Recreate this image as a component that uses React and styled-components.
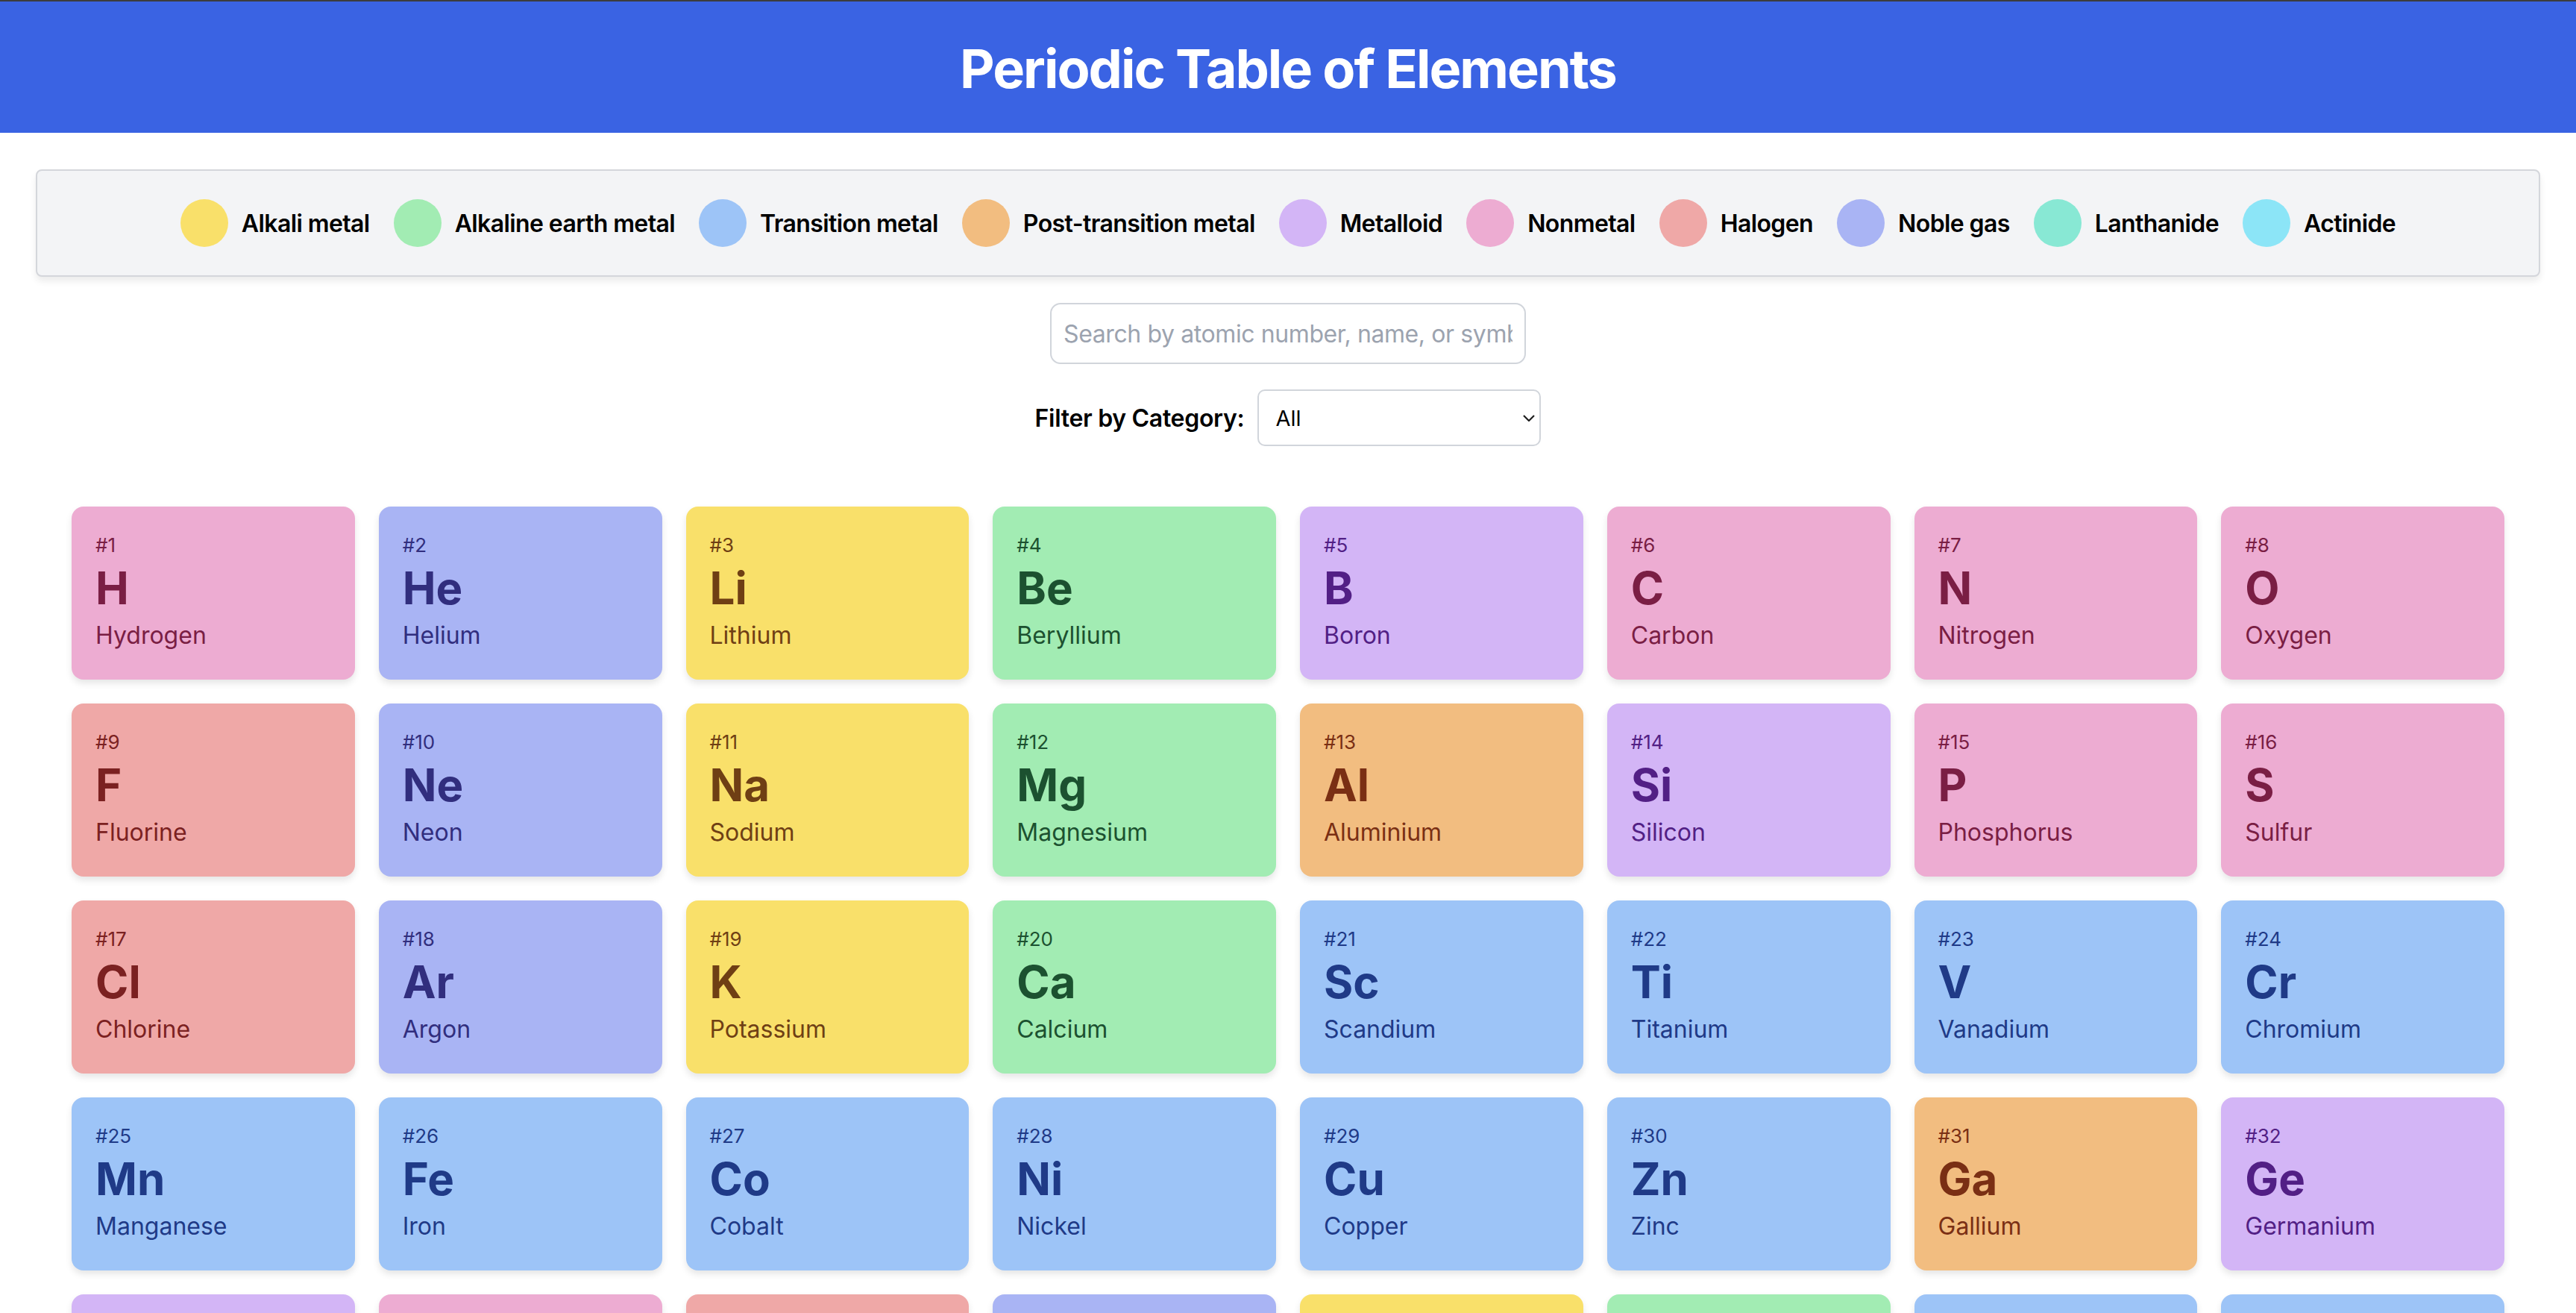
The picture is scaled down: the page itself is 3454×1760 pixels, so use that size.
import { useState } from "react";
import styled, { createGlobalStyle } from "styled-components";

const CATEGORIES = {
  alkali: { label: "Alkali metal", bg: "#f9e06a", fg: "#6f3f14" },
  alkaline: { label: "Alkaline earth metal", bg: "#a2ecb3", fg: "#1c5130" },
  transition: { label: "Transition metal", bg: "#9dc4f7", fg: "#1f3a87" },
  post: { label: "Post-transition metal", bg: "#f2bd80", fg: "#7a2f14" },
  metalloid: { label: "Metalloid", bg: "#d3b5f6", fg: "#521f85" },
  nonmetal: { label: "Nonmetal", bg: "#edacd2", fg: "#7a1e44" },
  halogen: { label: "Halogen", bg: "#efa8a7", fg: "#7b2121" },
  noble: { label: "Noble gas", bg: "#a9b4f4", fg: "#312e7e" },
  lanthanide: { label: "Lanthanide", bg: "#88e8d4", fg: "#134e4a" },
  actinide: { label: "Actinide", bg: "#8ce5f7", fg: "#164e63" },
};

const ELEMENTS = [
  [1, "H", "Hydrogen", "nonmetal"],
  [2, "He", "Helium", "noble"],
  [3, "Li", "Lithium", "alkali"],
  [4, "Be", "Beryllium", "alkaline"],
  [5, "B", "Boron", "metalloid"],
  [6, "C", "Carbon", "nonmetal"],
  [7, "N", "Nitrogen", "nonmetal"],
  [8, "O", "Oxygen", "nonmetal"],
  [9, "F", "Fluorine", "halogen"],
  [10, "Ne", "Neon", "noble"],
  [11, "Na", "Sodium", "alkali"],
  [12, "Mg", "Magnesium", "alkaline"],
  [13, "Al", "Aluminium", "post"],
  [14, "Si", "Silicon", "metalloid"],
  [15, "P", "Phosphorus", "nonmetal"],
  [16, "S", "Sulfur", "nonmetal"],
  [17, "Cl", "Chlorine", "halogen"],
  [18, "Ar", "Argon", "noble"],
  [19, "K", "Potassium", "alkali"],
  [20, "Ca", "Calcium", "alkaline"],
  [21, "Sc", "Scandium", "transition"],
  [22, "Ti", "Titanium", "transition"],
  [23, "V", "Vanadium", "transition"],
  [24, "Cr", "Chromium", "transition"],
  [25, "Mn", "Manganese", "transition"],
  [26, "Fe", "Iron", "transition"],
  [27, "Co", "Cobalt", "transition"],
  [28, "Ni", "Nickel", "transition"],
  [29, "Cu", "Copper", "transition"],
  [30, "Zn", "Zinc", "transition"],
  [31, "Ga", "Gallium", "post"],
  [32, "Ge", "Germanium", "metalloid"],
  [33, "As", "Arsenic", "metalloid"],
  [34, "Se", "Selenium", "nonmetal"],
  [35, "Br", "Bromine", "halogen"],
  [36, "Kr", "Krypton", "noble"],
  [37, "Rb", "Rubidium", "alkali"],
  [38, "Sr", "Strontium", "alkaline"],
  [39, "Y", "Yttrium", "transition"],
  [40, "Zr", "Zirconium", "transition"],
  [41, "Nb", "Niobium", "transition"],
  [42, "Mo", "Molybdenum", "transition"],
  [43, "Tc", "Technetium", "transition"],
  [44, "Ru", "Ruthenium", "transition"],
  [45, "Rh", "Rhodium", "transition"],
  [46, "Pd", "Palladium", "transition"],
  [47, "Ag", "Silver", "transition"],
  [48, "Cd", "Cadmium", "transition"],
];

function App() {
  const [query, setQuery] = useState("");
  const [category, setCategory] = useState("all");

  const q = query.trim().toLowerCase();
  const shown = ELEMENTS.filter(([num, sym, name, cat]) => {
    if (category !== "all" && cat !== category) return false;
    if (!q) return true;
    return (
      String(num) === q ||
      sym.toLowerCase().includes(q) ||
      name.toLowerCase().includes(q)
    );
  });

  return (
    <>
      <GlobalStyle />
      <Header>
        <Title>Periodic Table of Elements</Title>
      </Header>
      <Main>
        <Legend>
          {Object.entries(CATEGORIES).map(([key, c]) => (
            <LegendItem key={key}>
              <Swatch color={c.bg} />
              <LegendLabel>{c.label}</LegendLabel>
            </LegendItem>
          ))}
        </Legend>

        <Controls>
          <SearchInput
            placeholder="Search by atomic number, name, or symbol"
            value={query}
            onChange={(e) => setQuery(e.target.value)}
          />
          <FilterRow>
            <FilterLabel htmlFor="cat">Filter by Category:</FilterLabel>
            <SelectWrap>
              <Select
                id="cat"
                value={category}
                onChange={(e) => setCategory(e.target.value)}
              >
                <option value="all">All</option>
                {Object.entries(CATEGORIES).map(([key, c]) => (
                  <option key={key} value={key}>
                    {c.label}
                  </option>
                ))}
              </Select>
              <Chevron viewBox="0 0 16 9" aria-hidden="true">
                <path d="M1 1l7 7 7-7" />
              </Chevron>
            </SelectWrap>
          </FilterRow>
        </Controls>

        <Grid>
          {shown.map(([num, sym, name, cat]) => (
            <Card key={num} bg={CATEGORIES[cat].bg} fg={CATEGORIES[cat].fg}>
              <Number>#{num}</Number>
              <Symbol>{sym}</Symbol>
              <Name>{name}</Name>
            </Card>
          ))}
        </Grid>
      </Main>
    </>
  );
}

const GlobalStyle = createGlobalStyle`
  * { box-sizing: border-box; }
  body {
    margin: 0;
    background: #ffffff;
    font-family: Inter, "Noto Sans", "Liberation Sans", sans-serif;
    color: #000;
  }
`;

const Header = styled.header`
  background: #3a63e3;
  border-top: 2px solid #3c3c3e;
  padding: 47px 0 43px;
  text-align: center;
`;

const Title = styled.h1`
  margin: 0;
  font-size: 72px;
  line-height: 86px;
  font-weight: 700;
  letter-spacing: -2px;
  color: #ffffff;
`;

const Main = styled.main`
  padding: 49px 48px 0;
`;

const Legend = styled.div`
  display: flex;
  flex-wrap: wrap;
  justify-content: center;
  align-items: center;
  gap: 16px 32px;
  padding: 38px 32px;
  background: #f3f4f6;
  border: 2px solid #d4d6db;
  border-radius: 8px;
  box-shadow: 0 6px 10px rgba(0, 0, 0, 0.08);
`;

const LegendItem = styled.div`
  display: flex;
  align-items: center;
  gap: 18px;
`;

const Swatch = styled.span`
  width: 64px;
  height: 64px;
  border-radius: 50%;
  background: ${(props) => props.color};
`;

const LegendLabel = styled.span`
  font-size: 32px;
  font-weight: 600;
  letter-spacing: -0.6px;
`;

const Controls = styled.div`
  display: flex;
  flex-direction: column;
  align-items: center;
  gap: 34px;
  margin-top: 35px;
`;

const SearchInput = styled.input`
  width: 638px;
  height: 82px;
  padding: 0 16px;
  border: 2px solid #d1d5db;
  border-radius: 14px;
  font-family: inherit;
  font-size: 32px;
  letter-spacing: -0.4px;
  color: #111827;
  outline: none;
  &::placeholder {
    color: #9ca3af;
  }
`;

const FilterRow = styled.div`
  display: flex;
  align-items: center;
  gap: 18px;
`;

const FilterLabel = styled.label`
  font-size: 32px;
  font-weight: 600;
  letter-spacing: -0.3px;
`;

const SelectWrap = styled.div`
  position: relative;
  width: 380px;
  height: 76px;
`;

const Select = styled.select`
  appearance: none;
  width: 100%;
  height: 100%;
  padding: 0 40px 0 22px;
  border: 2px solid #d1d5db;
  border-radius: 10px;
  background: #ffffff;
  font-family: inherit;
  font-size: 29px;
  color: #000;
  outline: none;
`;

const Chevron = styled.svg`
  position: absolute;
  right: 8px;
  top: 34px;
  width: 16px;
  height: 9px;
  fill: none;
  stroke: #1f1f1f;
  stroke-width: 2.2;
  pointer-events: none;
`;

const Grid = styled.div`
  display: grid;
  grid-template-columns: repeat(8, 1fr);
  gap: 32px;
  padding: 81px 48px 48px;
`;

const Card = styled.div`
  display: flex;
  flex-direction: column;
  height: 232px;
  padding: 32px 32px;
  border-radius: 16px;
  background: ${(props) => props.bg};
  color: ${(props) => props.fg};
  box-shadow: 0 5px 10px rgba(0, 0, 0, 0.1);
`;

const Number = styled.span`
  font-size: 26px;
  line-height: 39px;
`;

const Symbol = styled.span`
  margin-top: 2px;
  font-size: 60px;
  line-height: 72px;
  font-weight: 700;
`;

const Name = styled.span`
  margin-top: 4px;
  font-size: 32px;
  line-height: 48px;
`;

export default App;
